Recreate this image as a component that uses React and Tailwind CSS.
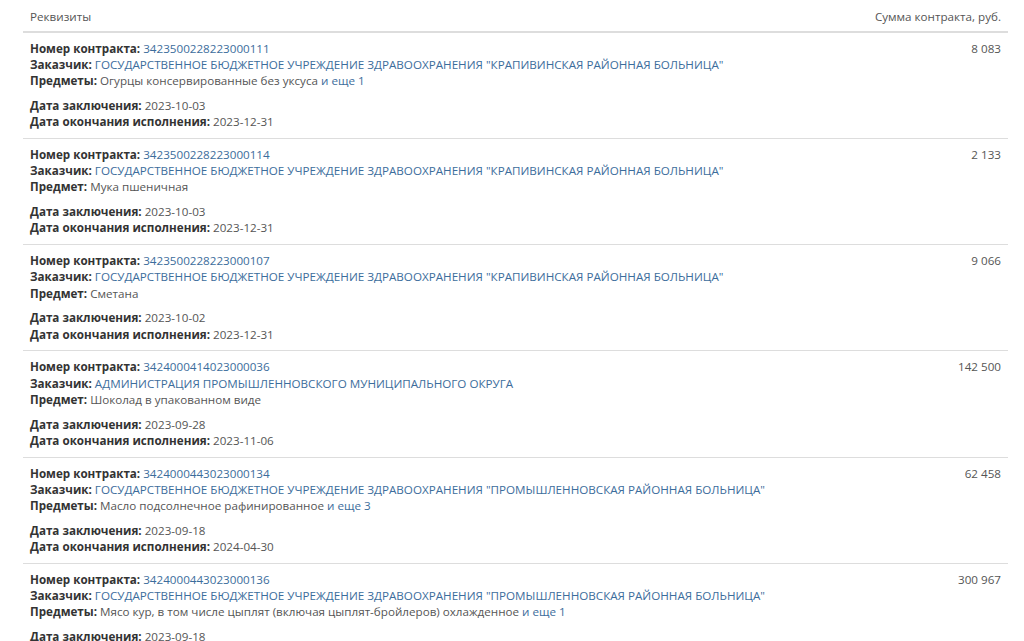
import React from "react";

const rows = [
  { num: "3423500228223000111", cust: 'ГОСУДАРСТВЕННОЕ БЮДЖЕТНОЕ УЧРЕЖДЕНИЕ ЗДРАВООХРАНЕНИЯ "КРАПИВИНСКАЯ РАЙОННАЯ БОЛЬНИЦА"', plural: true, subj: "Огурцы консервированные без уксуса", more: "и еще 1", d1: "2023-10-03", d2: "2023-12-31", sum: "8 083" },
  { num: "3423500228223000114", cust: 'ГОСУДАРСТВЕННОЕ БЮДЖЕТНОЕ УЧРЕЖДЕНИЕ ЗДРАВООХРАНЕНИЯ "КРАПИВИНСКАЯ РАЙОННАЯ БОЛЬНИЦА"', plural: false, subj: "Мука пшеничная", d1: "2023-10-03", d2: "2023-12-31", sum: "2 133" },
  { num: "3423500228223000107", cust: 'ГОСУДАРСТВЕННОЕ БЮДЖЕТНОЕ УЧРЕЖДЕНИЕ ЗДРАВООХРАНЕНИЯ "КРАПИВИНСКАЯ РАЙОННАЯ БОЛЬНИЦА"', plural: false, subj: "Сметана", d1: "2023-10-02", d2: "2023-12-31", sum: "9 066" },
  { num: "3424000414023000036", cust: "АДМИНИСТРАЦИЯ ПРОМЫШЛЕННОВСКОГО МУНИЦИПАЛЬНОГО ОКРУГА", plural: false, subj: "Шоколад в упакованном виде", d1: "2023-09-28", d2: "2023-11-06", sum: "142 500" },
  { num: "3424000443023000134", cust: 'ГОСУДАРСТВЕННОЕ БЮДЖЕТНОЕ УЧРЕЖДЕНИЕ ЗДРАВООХРАНЕНИЯ "ПРОМЫШЛЕННОВСКАЯ РАЙОННАЯ БОЛЬНИЦА"', plural: true, subj: "Масло подсолнечное рафинированное", more: "и еще 3", d1: "2023-09-18", d2: "2024-04-30", sum: "62 458" },
  { num: "3424000443023000136", cust: 'ГОСУДАРСТВЕННОЕ БЮДЖЕТНОЕ УЧРЕЖДЕНИЕ ЗДРАВООХРАНЕНИЯ "ПРОМЫШЛЕННОВСКАЯ РАЙОННАЯ БОЛЬНИЦА"', plural: true, subj: "Мясо кур, в том числе цыплят (включая цыплят-бройлеров) охлажденное", more: "и еще 1", d1: "2023-09-18", d2: "2024-04-30", sum: "300 967" },
];

function Label({ children }) {
  return <span className="font-bold text-[#333]">{children}</span>;
}

export default function App() {
  return (
    <div className="h-[641px] overflow-hidden bg-white text-[11.65px] leading-[16.25px] text-[#555]" style={{ fontFamily: '"Open Sans", sans-serif' }}>
      <div className="ml-[23px] w-[985px]">
        <div className="flex justify-between border-b-2 border-[#ddd] px-[7px] pt-[9px] pb-[5.25px] text-[#555]">
          <span>Реквизиты</span>
          <span>Сумма контракта, руб.</span>
        </div>
        {rows.map((r, i) => (
          <div key={i} className="flex justify-between border-b border-[#ddd] px-[7px] pt-[8px] pb-[7.5px]">
            <div>
              <div><Label>Номер контракта:</Label> <span className="text-[#3c6d9c]">{r.num}</span></div>
              <div><Label>Заказчик:</Label> <span className="text-[#3c6d9c]">{r.cust}</span></div>
              <div>
                <Label>{r.plural ? "Предметы:" : "Предмет:"}</Label> {r.subj}
                {r.more && <> <span className="text-[#3c6d9c]">{r.more}</span></>}
              </div>
              <div className="mt-[8.5px]"><Label>Дата заключения:</Label> {r.d1}</div>
              <div><Label>Дата окончания исполнения:</Label> {r.d2}</div>
            </div>
            <div className="text-right">{r.sum}</div>
          </div>
        ))}
      </div>
    </div>
  );
}
